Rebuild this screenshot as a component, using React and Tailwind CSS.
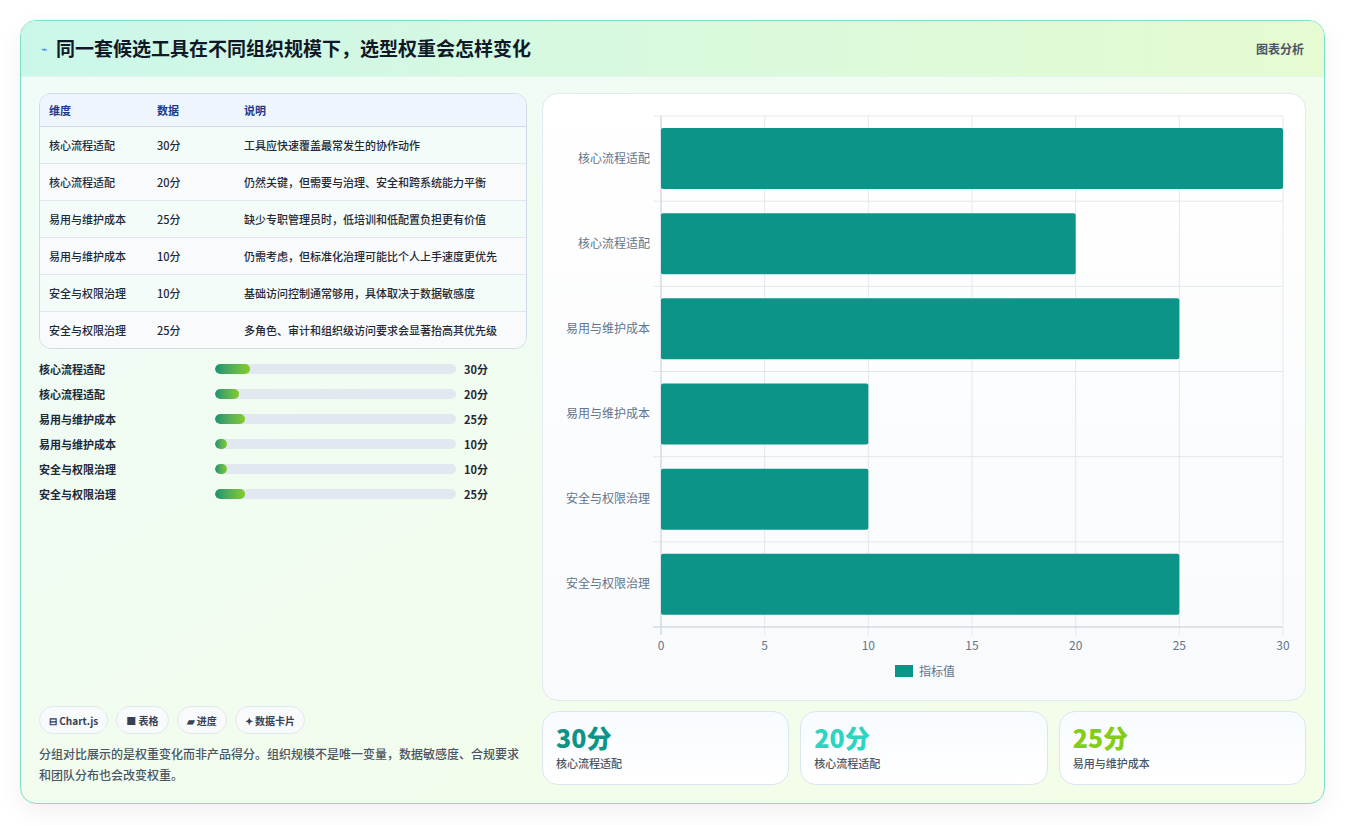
import React from "react";

const rows = [
  ["核心流程适配", "30分", "工具应快速覆盖最常发生的协作动作"],
  ["核心流程适配", "20分", "仍然关键，但需要与治理、安全和跨系统能力平衡"],
  ["易用与维护成本", "25分", "缺少专职管理员时，低培训和低配置负担更有价值"],
  ["易用与维护成本", "10分", "仍需考虑，但标准化治理可能比个人上手速度更优先"],
  ["安全与权限治理", "10分", "基础访问控制通常够用，具体取决于数据敏感度"],
  ["安全与权限治理", "25分", "多角色、审计和组织级访问要求会显著抬高其优先级"],
];
const vals = [30, 20, 25, 10, 10, 25];
const pw = { 30: 14.5, 20: 10, 25: 12.5, 10: 5 };

function Chart() {
  const L = 118, R = 740, T = 22, B = 533;
  const band = (B - T) / 6;
  const x = (v) => L + ((R - L) * v) / 30;
  return (
    <svg width="761" height="605" className="block" style={{ fontFamily: "'Noto Sans CJK SC', sans-serif" }}>
      {[0, 5, 10, 15, 20, 25, 30].map((t) => (
        <g key={t}>
          <line x1={x(t)} y1={T} x2={x(t)} y2={B + 8} stroke="#e5e7eb" />
          <text x={x(t)} y={556} fontSize="12" fill="#64748b" textAnchor="middle">{t}</text>
        </g>
      ))}
      {[0, 1, 2, 3, 4, 5, 6].map((i) => (
        <line key={i} x1={L - 8} y1={T + band * i} x2={R} y2={T + band * i} stroke="#e5e7eb" />
      ))}
      <line x1={L - 8} y1={B} x2={R} y2={B} stroke="#cbd5e1" />
      <line x1={L} y1={T} x2={L} y2={B + 8} stroke="#cbd5e1" />
      {vals.map((v, i) => (
        <g key={i}>
          <rect x={L} y={T + band * i + 12} width={x(v) - L} height={61} rx="2" fill="#0d9488" />
          <text x={107} y={T + band * i + band / 2 + 4} fontSize="12" fill="#64748b" textAnchor="end">{rows[i][0]}</text>
        </g>
      ))}
      <rect x={352} y={571} width={18} height={12} fill="#0d9488" />
      <text x={376} y={582} fontSize="12" fill="#64748b">指标值</text>
    </svg>
  );
}

export default function App() {
  return (
    <div className="min-h-[825px] bg-white pt-5 px-5" style={{ fontFamily: "'Noto Sans CJK SC', 'Noto Sans', sans-serif" }}>
      <div className="w-[1305px] h-[784px] rounded-2xl border border-[#7ee0cc] overflow-hidden bg-gradient-to-br from-[#effcf8] to-[#f4fde6] shadow-[0_8px_24px_rgba(0,0,0,0.06)] flex flex-col">
        <div className="h-[56px] shrink-0 flex items-center justify-between px-[20px] bg-gradient-to-r from-[#cbf7ea] to-[#e6fbd1] border-b border-[#dff5ee]">
          <div className="flex items-center gap-2">
            <span className="text-[#3b82f6] text-[11px]">⌁</span>
            <span className="text-[19px] font-bold text-[#111827]">同一套候选工具在不同组织规模下，选型权重会怎样变化</span>
          </div>
          <span className="text-[12px] font-semibold text-[#4b5563]">图表分析</span>
        </div>
        <div className="flex gap-[15px] px-[18px] pt-[16px] pb-[18px] flex-1">
          <div className="w-[488px] flex flex-col">
            <div className="rounded-xl border border-[#cfdbe6] overflow-hidden bg-[#f8fafc] text-[11px] text-[#1f2937]">
              <div className="flex h-[33px] items-center bg-[#eef5fd] text-[#1e3a8a] font-semibold border-b border-[#cfdbe6]">
                <div className="w-[117px] pl-[9px]">维度</div><div className="w-[87px]">数据</div><div>说明</div>
              </div>
              {rows.map((r, i) => (
                <div key={i} className={`flex py-[9px] leading-[18px] font-medium ${i < 5 ? "border-b border-[#dfe7ef]" : ""} ${i % 2 === 0 ? "bg-[#f3fcf8]" : "bg-[#f8fafc]"}`}>
                  <div className="w-[117px] pl-[9px] shrink-0">{r[0]}</div>
                  <div className="w-[87px] shrink-0">{r[1]}</div>
                  <div className="pr-[8px]">{r[2]}</div>
                </div>
              ))}
            </div>
            <div className="mt-[11px] flex flex-col gap-[7px]">
              {rows.map((r, i) => (
                <div key={i} className="flex items-center h-[18px] text-[11px] font-semibold text-[#1f2937]">
                  <div className="w-[176px]">{r[0]}</div>
                  <div className="w-[241px] h-[10px] rounded-full bg-[#e2e8f0] overflow-hidden">
                    <div className="h-full rounded-full bg-gradient-to-r from-[#16936f] to-[#84cc16]" style={{ width: pw[vals[i]] + "%" }} />
                  </div>
                  <div className="ml-[8px] font-bold">{r[1]}</div>
                </div>
              ))}
            </div>
            <div className="mt-auto flex gap-[8px] text-[10px] font-semibold text-[#374151]">
              {["⊟ Chart.js", "■ 表格", "▰ 进度", "✦ 数据卡片"].map((t) => (
                <span key={t} className="h-[28px] px-[9px] flex items-center rounded-full border border-[#e2e8f0] bg-[#f8fafc]">{t}</span>
              ))}
            </div>
            <p className="mt-[9px] text-[12px] leading-[21px] font-medium text-[#4b5563]">分组对比展示的是权重变化而非产品得分。组织规模不是唯一变量，数据敏感度、合规要求和团队分布也会改变权重。</p>
          </div>
          <div className="flex-1 flex flex-col gap-[10px]">
            <div className="h-[608px] rounded-2xl border border-[#e2eaf0] bg-gradient-to-b from-white to-[#f8fafc] overflow-hidden">
              <Chart />
            </div>
            <div className="flex gap-[11px]">
              {[["30分", "text-[#0d9488]", "核心流程适配"], ["20分", "text-[#2dd4bf]", "核心流程适配"], ["25分", "text-[#84cc16]", "易用与维护成本"]].map(([v, c, l], i) => (
                <div key={i} className="flex-1 h-[74px] rounded-2xl border border-[#dbe7ef] bg-gradient-to-b from-[#f7fbff] to-white px-[13px] pt-[9px]">
                  <div className={`text-[25px] leading-[32px] font-extrabold ${c}`}>{v}</div>
                  <div className="text-[11px] font-medium text-[#4b5563] mt-[2px]">{l}</div>
                </div>
              ))}
            </div>
          </div>
        </div>
      </div>
    </div>
  );
}
